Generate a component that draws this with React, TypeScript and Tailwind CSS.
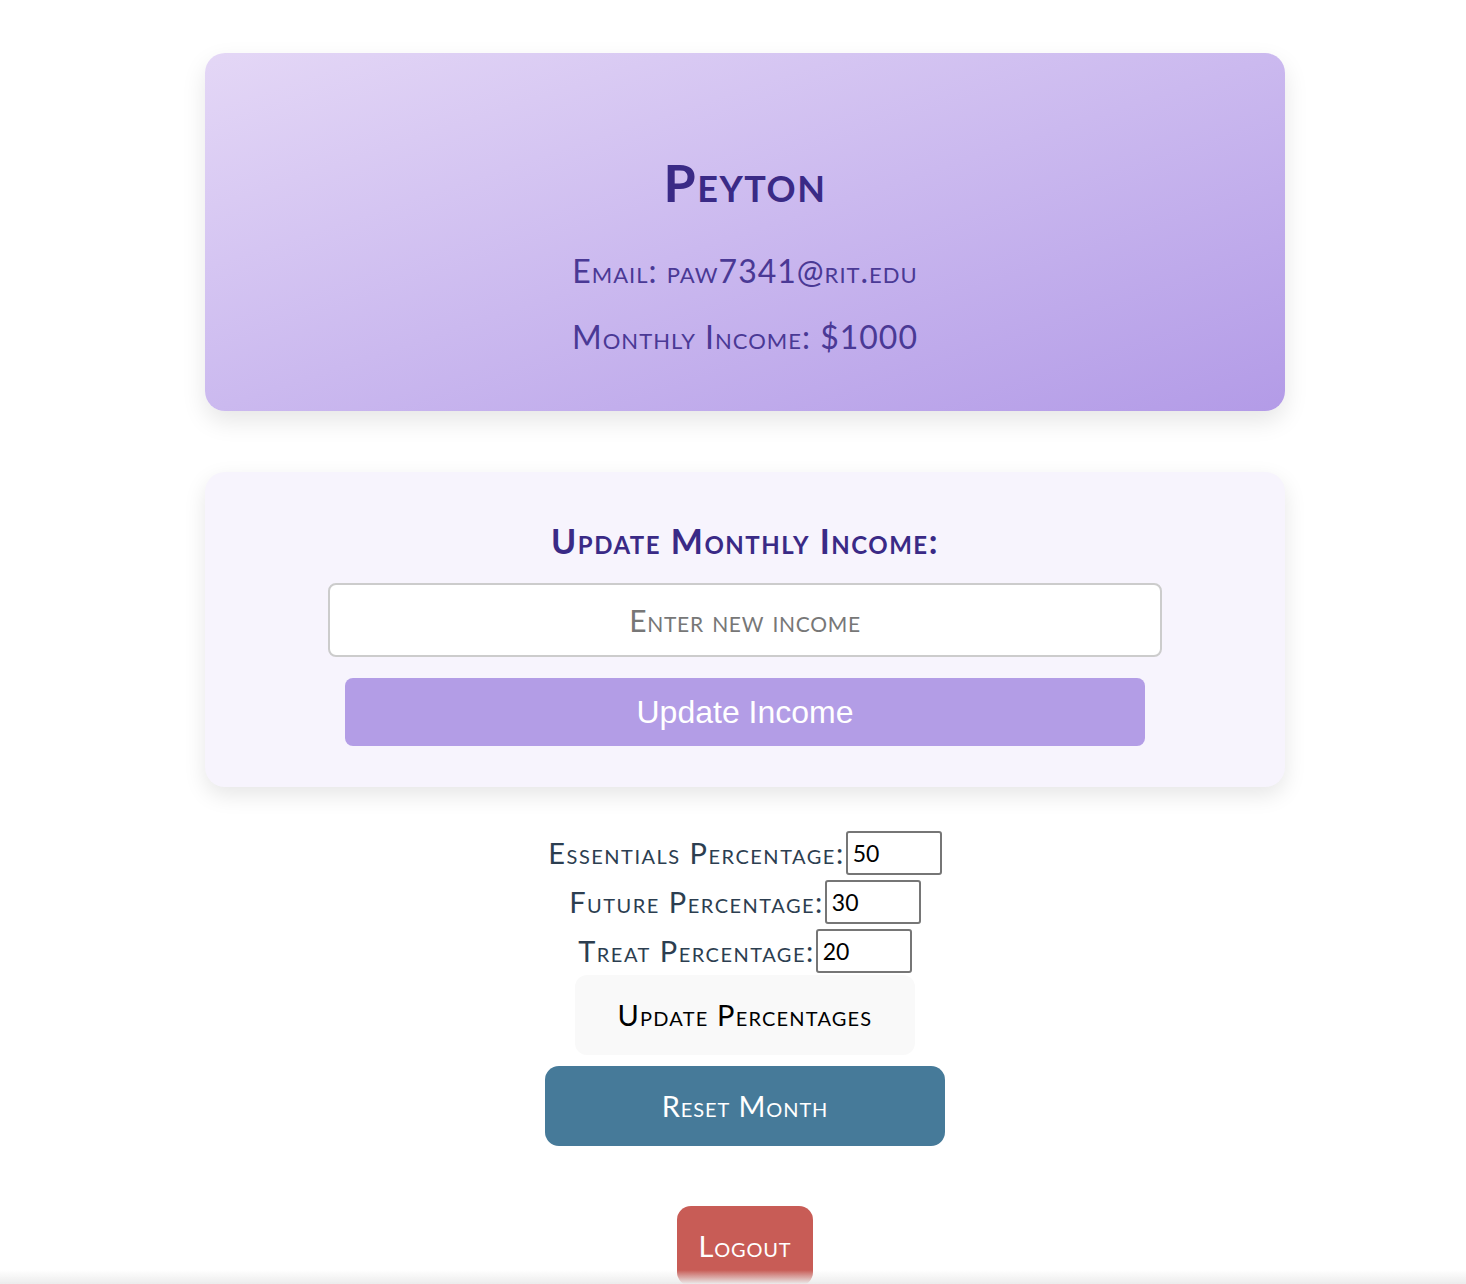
import React from "react";

export default function App() {
  const sc = "[font-variant:small-caps]";
  return (
    <div className="min-h-screen bg-white font-['Lato',sans-serif]">
      <div className="flex flex-col items-center pt-[53px] pb-[40px] pl-[24px]">
        {/* Profile card */}
        <div className="w-[1080px] rounded-[20px] bg-gradient-to-br from-[#e4d7f6] to-[#b39be7] shadow-[0_10px_24px_rgba(0,0,0,0.10)] pt-[99px] pb-[54px] flex flex-col items-center">
          <h1 className={`${sc} font-bold text-[52px] leading-[60px] text-[#3a2a86] tracking-[1.5px]`}>Peyton</h1>
          <p className={`${sc} mt-[39px] text-[32px] leading-[40px] text-[#4a3995] tracking-[1px]`}>Email: paw7341@rit.edu</p>
          <p className={`${sc} mt-[26px] text-[32px] leading-[40px] text-[#4a3995] tracking-[1px]`}>Monthly Income: $1000</p>
        </div>

        {/* Update income card */}
        <div className="mt-[61px] w-[1080px] rounded-[20px] bg-[#f7f4fd] shadow-[0_8px_22px_rgba(0,0,0,0.10)] pt-[49px] pb-[41px] flex flex-col items-center">
          <h2 className={`${sc} font-bold text-[34px] leading-[40px] text-[#3a2a86] tracking-[1.5px]`}>Update Monthly Income:</h2>
          <input
            type="text"
            placeholder="Enter new income"
            className={`${sc} mt-[22px] w-[834px] h-[74px] rounded-[8px] border-2 border-[#cccccc] bg-white text-center text-[30px] tracking-[0.7px] text-[#333] placeholder:text-[#777777] outline-none`}
          />
          <button className="mt-[21px] w-[800px] h-[68px] rounded-[8px] bg-[#b39de6] text-white text-[32px] font-['Liberation_Sans',Arial,sans-serif]">
            Update Income
          </button>
        </div>

        {/* Percentages */}
        <div className="mt-[44px] flex flex-col items-center gap-[5px]">
          {[
            ["Essentials Percentage:", "50"],
            ["Future Percentage:", "30"],
            ["Treat Percentage:", "20"],
          ].map(([label, val]) => (
            <div key={label} className="flex items-center h-[44px]">
              <span className={`${sc} text-[29px] tracking-[1.5px] text-[#2c3e50]`}>{label}</span>
              <input
                type="text"
                defaultValue={val}
                className="ml-[1px] w-[96px] h-[44px] rounded-[3px] border-2 border-[#767676] bg-white px-[5px] text-[23px] text-black outline-none"
              />
            </div>
          ))}
        </div>

        <button className={`${sc} mt-[2px] w-[340px] h-[80px] rounded-[12px] bg-[#f9f9f9] text-[29px] text-black tracking-[1.2px]`}>
          Update Percentages
        </button>

        <button className={`${sc} mt-[11px] w-[400px] h-[80px] rounded-[14px] bg-[#467a99] text-[29px] text-white tracking-[0.9px]`}>
          Reset Month
        </button>

        <button className={`${sc} mt-[60px] w-[136px] h-[80px] rounded-[14px] bg-[#c85c56] text-[29px] text-white tracking-[0.8px]`}>
          Logout
        </button>
      </div>
      <div className="fixed bottom-0 left-0 right-0 h-[14px] bg-gradient-to-b from-[rgba(240,240,240,0)] to-[rgba(236,236,236,1)] pointer-events-none" />
    </div>
  );
}
